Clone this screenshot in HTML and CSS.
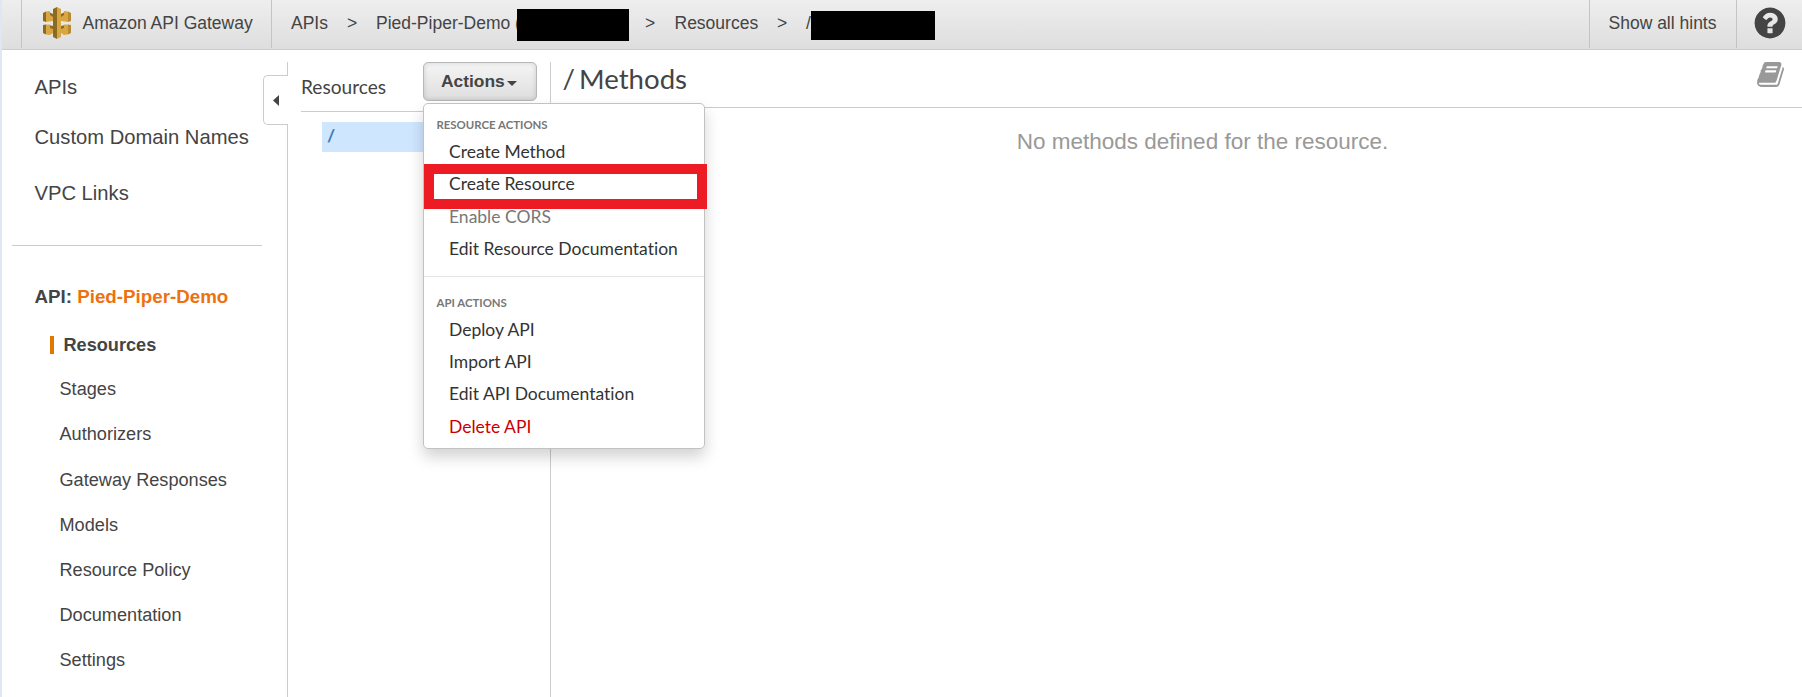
FILE: index.html
```html
<!DOCTYPE html>
<html lang="en">
<head>
<meta charset="utf-8">
<title>Amazon API Gateway</title>
<link rel="stylesheet" href="styles.css">
</head>
<body>
<header class="topbar">
  <div class="brand">
    <svg class="logo" width="28" height="32" viewBox="0 0 28 32">
      <path fill="#8b6b22" d="M6 5l4 2v3H6zM22 5l-4 2v3h4zM6 18l4 1v4H6zM22 18l-4 1v4h4z"/>
      <path fill="#d9a741" d="M3 4.500l4-.5v4l3 2v4l-7 1zM25 4.500L21 4v4l-3 2v4l7 1zM3 17.500h4V21l3 1v4l-3 2-4-.5zM25 17.500h-4V21l-3 1v4l3 2 4-.5z"/>
      <path fill="#8b6b22" d="M0 6l3-1.500V15l-3-1zM0 18l3-.5v10L0 26z"/>
      <path fill="#b9892f" d="M28 6l-3-1.500V15l3-1zM28 18l-3-.5v10l3-1.500z"/>
      <path fill="#8b6b22" d="M14 0l-4 2v28l4 2z"/>
      <path fill="#d9a741" d="M14 0l4 2v28l-4 2z"/>
    </svg>
    <span>Amazon API Gateway</span>
  </div>
  <nav class="crumbs">
    <span class="c-apis">APIs</span><span class="c-sep1">&gt;</span><span class="c-api">Pied-Piper-Demo (</span><span class="mask mask-id"></span><span class="c-sep2">&gt;</span><span class="c-res">Resources</span><span class="c-sep3">&gt;</span><span class="c-path">/</span><span class="mask mask-path"></span>
  </nav>
  <div class="hints">Show all hints</div>
  <div class="help">
    <svg width="36" height="36" viewBox="0 0 1792 1792"><path fill="#444" d="M1024 1376v-192q0-14-9-23t-23-9h-192q-14 0-23 9t-9 23v192q0 14 9 23t23 9h192q14 0 23-9t9-23zm256-672q0-88-55.500-163t-138.500-116-170-41q-243 0-371 213-15 24 8 42l132 100q7 6 19 6 16 0 25-12 53-68 86-92 34-24 86-24 48 0 85.500 26t37.500 59q0 38-20 61t-68 45q-63 28-115.500 86.500t-52.500 125.500v36q0 14 9 23t23 9h192q14 0 23-9t9-23q0-19 21.500-49.500t54.500-49.500q32-18 49-28.500t46-35 44.500-48 28-60.500 12.500-81zm384 192q0 209-103 385.500t-279.500 279.500-385.500 103-385.500-103-279.500-279.500-103-385.500 103-385.500 279.500-279.500 385.500-103 385.500 103 279.500 279.500 103 385.500z"/></svg>
  </div>
</header>
<main class="page">
  <aside class="sidebar">
    <ul class="nav-main">
      <li class="n-apis">APIs</li>
      <li class="n-domains">Custom Domain Names</li>
      <li class="n-vpc">VPC Links</li>
    </ul>
    <div class="api-name">API: <span>Pied-Piper-Demo</span></div>
    <ul class="nav-sub">
      <li class="active"><span>Resources</span></li>
      <li>Stages</li>
      <li>Authorizers</li>
      <li>Gateway Responses</li>
      <li>Models</li>
      <li>Resource Policy</li>
      <li>Documentation</li>
      <li>Settings</li>
    </ul>
    <div class="collapse"><svg width="6" height="11" viewBox="0 0 6 11"><path fill="#444" d="M6 0v11L0 5.500z"/></svg></div>
  </aside>
  <section class="resources">
    <div class="res-head">
      <span class="res-title">Resources</span>
      <div class="dropdown">
        <button class="actions">Actions<i class="caret"></i></button>
        <div class="menu">
          <div class="menu-head">RESOURCE ACTIONS</div>
          <div class="item">Create Method</div>
          <div class="item">Create Resource</div>
          <div class="item disabled">Enable CORS</div>
          <div class="item">Edit Resource Documentation</div>
          <div class="divider"></div>
          <div class="menu-head">API ACTIONS</div>
          <div class="item">Deploy API</div>
          <div class="item">Import API</div>
          <div class="item">Edit API Documentation</div>
          <div class="item danger">Delete API</div>
          <div class="marker"></div>
        </div>
      </div>
    </div>
    <div class="tree-root">/</div>
  </section>
  <section class="methods">
    <div class="methods-head">
      <h1>/ Methods</h1>
      <svg width="29" height="29" viewBox="0 0 1792 1792"><path fill="#999" d="M1703 478q40 57 18 129l-275 906q-19 64-76.500 107.500t-122.500 43.500h-923q-77 0-148.500-53.500t-99.500-131.500q-24-67-2-127 0-4 3-27t4-37q1-8-3-21.500t-3-19.500q2-11 8-21t16.500-23.500 16.500-23.500q23-38 45-91.500t30-91.500q3-10 .5-30t-.5-28q3-11 17-28t17-23q21-36 42-92t25-90q1-9-2.500-32t.5-28q4-13 22-30.500t22-22.500q19-26 42.500-84.500t27.500-96.500q1-8-3-25.500t-2-26.500q2-8 9-18t18-23 17-21q8-12 16.500-30.500t15-35 16-36 19.500-32 26.500-23.500 36-11.500 47.500 5.500l-1 3q38-9 51-9h761q74 0 114 56t18 130l-274 906q-36 119-71.500 153.500t-128.500 34.500h-869q-27 0-38 15-11 16-1 43 24 70 144 70h923q29 0 56-15.500t35-41.500l300-987q7-22 5-57 38 15 59 43zm-1064 2q-4 13 2 22.500t20 9.500h608q13 0 25.500-9.500t16.500-22.500l21-64q4-13-2-22.500t-20-9.500h-608q-13 0-25.500 9.500t-16.500 22.500zm-83 256q-4 13 2 22.500t20 9.500h608q13 0 25.500-9.500t16.500-22.500l21-64q4-13-2-22.500t-20-9.500h-608q-13 0-25.500 9.500t-16.500 22.500z"/></svg>
    </div>
    <p class="empty">No methods defined for the resource.</p>
  </section>
</main>
</body>
</html>
```
FILE: styles.css
```css
* { box-sizing: border-box; }
html, body { margin: 0; height: 100%; overflow: hidden; }
body {
  display: flex;
  flex-direction: column;
  border-left: 2px solid #dde8f4;
  background: #fff;
  color: #444;
  font-family: "Liberation Sans", Arial, sans-serif;
  font-size: 17.5px;
  font-variant-ligatures: none;
}
ul { list-style: none; margin: 0; padding: 0; }
svg { display: block; flex: none; }

.topbar {
  display: flex;
  flex: none;
  height: 50px;
  padding-left: 19px;
  border-bottom: 1px solid #ccc;
  background: linear-gradient(#eee, #dedede);
  line-height: 46px;
  white-space: nowrap;
}
.brand {
  display: flex;
  width: 251px;
  height: 48px;
  padding: 0 0 0 21px;
  border-left: 1px solid #c4c4c4;
  border-right: 1px solid #c4c4c4;
}
.logo { margin: 7px 11.5px 0 0; }
.crumbs { display: flex; flex: 1; padding-left: 19px; }
.crumbs > span { flex: none; }
.c-apis { width: 56px; }
.c-sep1 { width: 29px; }
.c-api { width: 141px; }
.mask { background: #000; }
.mask-id { width: 112px; height: 32px; margin: 9px 16px 0 0; }
.c-sep2 { width: 29.5px; }
.c-res { width: 102.5px; }
.c-sep3 { width: 29px; }
.c-path { width: 5px; }
.mask-path { width: 124px; height: 29px; margin-top: 11px; }
.hints {
  width: 147px;
  height: 48px;
  padding-left: 18.5px;
  border-left: 1px solid #c4c4c4;
}
.help {
  width: 66px;
  height: 48px;
  padding: 5px 0 0 15px;
  border-left: 1px solid #c4c4c4;
}

.page { display: flex; flex: 1; padding-top: 12px; min-height: 0; }
.sidebar {
  position: relative;
  flex: none;
  width: 286px;
  border-right: 1px solid #ccc;
}
.nav-main {
  width: 250px;
  height: 184px;
  margin-left: 10px;
  padding-left: 22.5px;
  border-bottom: 1px solid #ccc;
  font-size: 20.2px;
}
.n-apis { height: 49px; line-height: 50px; }
.n-domains { height: 54px; line-height: 53px; }
.n-vpc { height: 56px; line-height: 57px; }
.api-name {
  padding: 39px 0 0 32.5px;
  line-height: 24px;
  font-size: 18.75px;
  font-weight: bold;
}
.api-name span { color: #ec7211; }
.nav-sub { padding: 13px 0 0 57.5px; font-size: 18.15px; }
.nav-sub li { height: 45.2px; line-height: 45.2px; }
.nav-sub .active { display: flex; align-items: center; margin-left: -9.5px; font-weight: bold; }
.nav-sub .active span {
  height: 18px;
  padding-left: 9.5px;
  border-left: 4px solid #e07700;
  line-height: 18px;
}
.collapse {
  position: absolute;
  top: 13px;
  left: 261px;
  display: flex;
  align-items: center;
  width: 25px;
  height: 50px;
  padding-left: 9px;
  border: 1px solid #ccc;
  border-right: 0;
  border-radius: 5px 0 0 5px;
  background: #fff;
}
/* hides the column border behind the collapse tab */
.collapse::after {
  content: "";
  position: absolute;
  top: 0;
  right: -1px;
  width: 1px;
  height: 48px;
  background: #fff;
}

.resources { flex: none; width: 263px; border-right: 1px solid #ccc; }
.res-head {
  display: flex;
  height: 50px;
  margin-left: 13px;
  border-bottom: 1px solid #ccc;
  font-family: Lato, sans-serif;
}
.res-title { width: 122px; line-height: 50px; font-size: 19.1px; }
.dropdown { position: relative; }
.actions {
  display: flex;
  align-items: center;
  width: 114px;
  height: 39px;
  padding: 0 0 1px 17px;
  border: 1px solid #b7b7b7;
  border-radius: 5px;
  background: linear-gradient(#f5f5f5, #dedede);
  box-shadow: inset 0 0 5px rgba(0, 0, 0, .15);
  color: #444;
  font: bold 17.4px "Liberation Sans", Arial, sans-serif;
}
.caret {
  margin: 4px 0 0 2px;
  border: 5px solid transparent;
  border-top-color: #444;
  border-bottom: 0;
}
.tree-root {
  height: 30px;
  margin: 10px 0 0 34px;
  padding-left: 5px;
  background: #cfe6ff;
  color: #337ab7;
  font: bold 17.5px/28px Lato, sans-serif;
}
.menu {
  position: absolute;
  z-index: 2;
  top: 41px;
  left: 0;
  width: 282px;
  height: 346px;
  padding-top: 13px;
  border: 1px solid #c2c2c2;
  border-radius: 5px;
  background: #fff;
  box-shadow: 0 8px 15px rgba(0, 0, 0, .175);
  white-space: nowrap;
}
.menu-head {
  height: 18px;
  padding-left: 12.5px;
  color: #777;
  font-size: 11.4px;
  font-weight: bold;
  line-height: 15px;
}
.item {
  height: 32.4px;
  padding-left: 25px;
  color: #333;
  font-size: 17.5px;
  line-height: 33px;
}
.disabled { color: #777; }
.danger { color: #c00; }
.divider { height: 1px; margin: 11px 0 18px; background: #e5e5e5; }
.marker {
  position: absolute;
  top: 60px;
  left: 0;
  width: 283px;
  height: 45px;
  border: 10px solid #ed1c24;
}

.methods { flex: 1; }
.methods-head {
  display: flex;
  justify-content: space-between;
  height: 46px;
  padding: 0 17px 0 11.5px;
  border-bottom: 1px solid #ccc;
}
.methods-head h1 { margin: 0; font: 400 27.6px/34px Lato, sans-serif; word-spacing: -3px; }
.methods-head svg { margin-top: -2px; }
.empty { margin: 20px 0 0; padding-left: 52px; color: #999; font-size: 22.5px; line-height: 28px; text-align: center; }
```
